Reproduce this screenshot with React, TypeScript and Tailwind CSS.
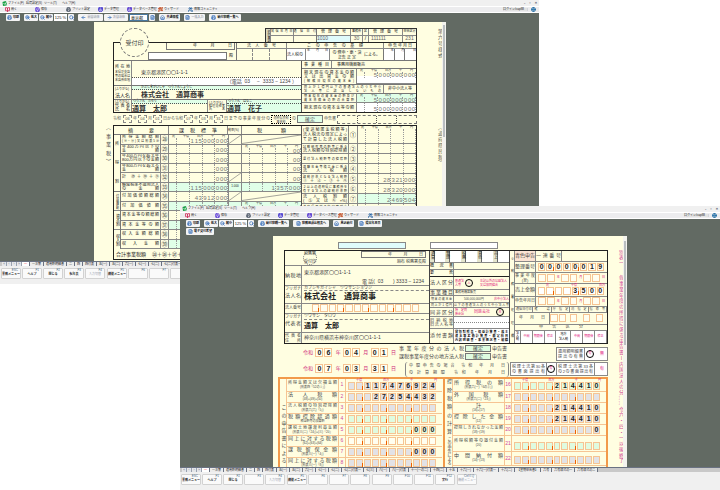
import type { ReactNode } from 'react';
import clsx from 'clsx';
import { BookOpen, Save, Printer, Database, Wand2, Users, ZoomIn, ZoomOut, Search, FileText, Home, Globe, ArrowLeft, ArrowRight } from 'lucide-react';

type BoxProps = {
    className?: string;
    children?: ReactNode;
};

const menus = ["ファイル(F)", "環境設定(S)", "ツール(T)", "ヘルプ(H)"];

const tools = [
    { label: "開く", icon: BookOpen, width: "w-[30px]", color: "text-[#d02050]" },
    { label: "保存", icon: Save, width: "w-[31px]", color: "text-[#6040d8]" },
    { label: "プリント設定", icon: Printer, width: "w-8", color: "text-gray-600" },
    { label: "データ管理", icon: Database, width: "w-[29px]", color: "text-[#4030d0]" },
    { label: "データベース管理", icon: Database, width: "w-[31px]", color: "text-[#5030d0]" },
    { label: "ウィザード", icon: Wand2, width: "w-[30px]", color: "text-[#c04010]" },
    { label: "情報コミュニティ", icon: Users, width: "w-[36px]", color: "text-[#2060a0]" },
];

const keys = [
    ["ESC", "業務メニュー"], ["F1", "ヘルプ"], ["F2", "閉じる"], ["F3", ""], ["F4", "入力切替"], ["F5", "機能メニュー"], ["F6", ""],
    ["F7", ""], ["F8", ""], ["F9", ""], ["F10", ""], ["F11", ""], ["F12", "実行"], ["CtrlとQ", "機能メニュー"],
];

const tabs = [
    "一", "一次葉", "適用額明細書", "二", "四", "四付表", "五(一)", "五(二)", "六(一)", "七(一)", "七(二)", "七(二)付表一", "七(三)", "八(一)",
    "八(一)付表", "十一(一の二)", "十四(二)", "十五", "十六(一)", "十六(一)付表一", "十六(二)", "【翌期申告書】", "六号", "六号様式の一", "六号様式の二",
];

const Chip = ({ className, children, icon: Icon }: BoxProps & { icon?: typeof Save }) => (
    <button className={clsx("flex h-[7px] shrink-0 items-center justify-center gap-px overflow-hidden whitespace-nowrap rounded-[1px] bg-[#f4f4f4] text-[3px] font-bold text-black", className)}>
        {Icon && <Icon className="size-[5px] shrink-0 text-[#2864b4]" strokeWidth={3} />}
        {children}
    </button>
);

const AppWindow = ({ className, chips, children, f3 }: BoxProps & { chips: ReactNode; f3?: string }) => (
    <section className={clsx("absolute flex h-[58%] w-3/4 flex-col overflow-hidden bg-[#626a63]", className)}>
        <header className="flex h-[6px] shrink-0 items-center bg-[#f0f0f0] pl-[2px] text-[3px]">
            <svg viewBox="0 0 10 10" className="mr-px size-[5px]" aria-hidden="true">
                <path d="M1 2l6-2 3 3-1 6-7 1z" fill="#18a045" />
                <path d="M3 4l3 3 3-5" fill="none" stroke="#fff" strokeWidth="1.5" />
            </svg>
            {menus.map((menu) => <button key={menu} className="w-[18px] whitespace-nowrap text-left">{menu}</button>)}
            <div className="ml-auto flex w-[15px] justify-between pr-[2px] text-[4px] font-bold text-gray-600">
                <button aria-label="最小化">-</button>
                <button aria-label="元に戻す">▫</button>
                <button aria-label="閉じる">×</button>
            </div>
        </header>
        <nav className="flex h-[7px] shrink-0 items-center border-y border-white bg-[#ececee] pl-[5px] text-[3px]">
            {tools.map(({ label, icon: Icon, width, color }) => (
                <button key={label} className={clsx("flex shrink-0 items-center gap-px whitespace-nowrap", width)}>
                    <Icon className={clsx("size-[5px] shrink-0", color)} strokeWidth={4} />
                    {label}
                </button>
            ))}
            <span className="ml-auto mr-[3px] w-[25px] whitespace-nowrap border-r border-gray-300 bg-[#e2e2e2]">ログイン/cap88</span>
            <Globe className="mr-[3px] size-[5px] text-[#2872a8]" strokeWidth={4} />
        </nav>
        <div className="shrink-0 pl-[6px] pt-px">{chips}</div>
        <div className="min-h-0 flex-1 overflow-hidden">{children}</div>
        <nav className="flex h-[5px] shrink-0 items-center overflow-hidden border-t border-gray-500 bg-[#c9c9c9] pl-[2px] text-[3px]">
            {["«", "‹", "›", "»"].map((a) => <button key={a} className="h-[4px] w-[5px] shrink-0 border-r border-gray-400 bg-gray-200 leading-none text-gray-500">{a}</button>)}
            {tabs.map((tab, i) => (
                <button key={tab} className={clsx("h-[4px] shrink-0 whitespace-nowrap border-r border-gray-500 px-[2px] leading-none", i === 0 ? "bg-white text-red-600" : "bg-[#ececec]")}>{tab}</button>
            ))}
        </nav>
        <footer className="flex h-[18px] shrink-0 gap-px bg-[#f0f0f0] px-px pt-[2px]">
            {keys.map(([key, label], i) => (
                <button key={key} className={clsx("flex h-[11px] w-5 shrink-0 flex-col rounded-[1px] border border-[#d2d2d2] bg-[#fafafa] text-[3px]", (i === 5 || i === 9 || i === 13) && "ml-px")}>
                    <span className="w-full pr-[2px] text-right text-[#3f6580]">{key}</span>
                    <span className={clsx("w-full whitespace-nowrap pt-px text-center", i === 4 || i === 13 ? "text-gray-400" : "font-bold")}>{key === "F3" ? f3 : label}</span>
                </button>
            ))}
        </footer>
    </section>
);

// label spread over the whole width of its cell
const Spread = ({ className, children }: BoxProps) => (
    <span className={clsx("block whitespace-nowrap [text-align-last:justify]", className)}>{children}</span>
);

const Cell = ({ className, children }: BoxProps) => (
    <div className={clsx("flex min-w-0 shrink-0 flex-col justify-center overflow-hidden border-[#888]", className)}>{children}</div>
);

const Vertical = ({ className, children }: BoxProps) => (
    <span className={clsx("whitespace-nowrap [text-align-last:justify] [writing-mode:vertical-rl]", className)}>{children}</span>
);

const Amount = ({ value = "", className, units }: { value?: string; className?: string; units?: boolean }) => (
    <div className={clsx("flex shrink-0 flex-col justify-end overflow-hidden border-b border-[#888]", className)}>
        {units && (
            <div className="flex justify-between px-[3px] text-[3px]">
                <span>兆</span><span>十億</span><span>百万</span><span>千</span><span>円</span>
            </div>
        )}
        <div className="grid min-h-0 flex-1 grid-cols-14 items-end text-center text-[6px] text-[#777]">
            {value.padStart(14, " ").split("").map((digit, i) => (
                <span key={i} className={clsx("flex h-full items-end justify-center", i % 3 === 1 && "border-r border-dotted border-[#999]")}>{digit}</span>
            ))}
        </div>
    </div>
);

const DateBlanks = ({ className }: BoxProps) => (
    <div className={clsx("flex items-center justify-between border border-[#777] pl-[26px] pr-[2px]", className)}>
        <span>年</span><span>月</span><span>日</span>
    </div>
);

const DashedDigits = ({ children }: BoxProps) => (
    <span className="flex h-[8px] w-[9px] shrink-0 items-center justify-center border border-dashed border-[#888]">{children}</span>
);

const taxRows = [
    { label: ["所得金額総額", "(⑱−⑲)又は別表5⑳"], value: "115000000" },
    { label: ["年400万円以下の", "金額"], value: "000" },
    { label: ["年400万円を超え年", "800万円以下の金額"], value: "000" },
    { label: ["年800万円を超える", "金額"], value: "000" },
    { label: ["計 ㉙＋㉚＋㉛"], value: "000" },
    { label: ["軽減税率不適用法人", "の金額"], value: "115000000", green: true },
    { label: ["付加価値額総額"], value: "43912000" },
    { label: ["付加価値額"], value: "43912000", green: true },
    { label: ["資本金等の額総額"], value: "" },
    { label: ["資本金等の額"], value: "", green: true },
    { label: ["収入金額総額"], value: "" },
    { label: ["収入金額"], value: "", green: true },
];
const taxMarks = "㉘㉙㉚㉛㉜㉝㉞㉟㊱㊲㊳㊴";

const corporateRows = [
    { label: ["試験研究費の額等に係る", "法人税額の特別控除額"], value: "" },
    { label: ["還付法人税額等の控除額"], value: "" },
    { label: ["退職年金等積立金に係る", "法人税額"], value: "" },
    { label: ["課税標準となる法人税額", "①＋②−③＋④"], value: "28321000" },
    { label: ["２以上の道府県に事務所を", "有する法人の課税標準額"], value: "28320000" },
    { label: ["法人税割額", "(⑤又は⑥×%)"], value: "2469504", green: true },
    { label: ["道府県民税の特定寄附金", "税額控除額"], value: "" },
];

const Lines = ({ lines }: { lines: string[] }) => (
    <>
        {lines.map((line) => <Spread key={line} className={clsx("leading-[4px]", line.length > 10 ? "text-[3px]" : "text-[4px]")}>{line}</Spread>)}
    </>
);

const LocalTaxForm = () => (
    <article className="ml-[94px] flex h-full w-[352px] bg-[#fffee1] text-[4px]">
        <div className="flex w-[19px] shrink-0 justify-end pr-[3px] pt-[103px]">
            <Vertical className="h-[39px] text-[5px] text-[#444]">（事業税）</Vertical>
        </div>
        <div className="w-[304px] shrink-0 pt-[6px]">
            <div className="ml-auto flex h-[14px] w-[152px] border border-b-0 border-[#333]">
                <Cell className="w-[5px] border-r bg-[#d8d8c0] text-[3px]"><Vertical>処理事項</Vertical></Cell>
                <div className="grid w-[45px] shrink-0 grid-cols-2 grid-rows-2 text-center text-[3px]">
                    <Cell className="border-b border-r"><Spread>発信年月日</Spread></Cell><Cell className="border-b"><Spread>通信日付</Spread></Cell>
                    <Cell className="border-r" /><Cell />
                </div>
                <div className="grid flex-1 grid-cols-[34px_12px_6px_1fr_13px] grid-rows-2 border-l border-[#777] text-center">
                    <Cell className="border-b border-r px-[4px]"><Spread>管理番号</Spread></Cell>
                    <Cell className="border-b border-r text-[3px]">事務所</Cell>
                    <Cell className="border-b border-r text-[3px]">区</Cell>
                    <Cell className="border-b border-r px-[4px]"><Spread>管理番号</Spread></Cell>
                    <Cell className="border-b text-[3px]">申告区分</Cell>
                    <Cell className="border-r bg-[#e0fbfb] text-left text-[5px] text-[#666]">1010</Cell>
                    <Cell className="border-r text-[5px] text-[#666]">30</Cell>
                    <Cell className="border-r text-[5px]">/</Cell>
                    <Cell className="border-r pl-[2px] text-left text-[5px] text-[#666]">111111</Cell>
                    <Cell className="text-[5px] text-[#666]">231</Cell>
                </div>
            </div>
            <div className="h-[71px] border border-[#222]">
                <div className="flex h-[18px] border-b border-[#777]">
                    <div className="relative w-[123px] shrink-0 border-r border-[#777]">
                        <div className="absolute -top-[15px] left-[6px] flex size-[29px] items-center justify-center rounded-full border border-dashed border-[#777] bg-[#fffee1] text-[6px] text-[#444]">受付印</div>
                        <DateBlanks className="ml-[52px] h-[7px] w-[69px] border-t-0 text-[4px]" />
                        <div className="flex items-center gap-[2px] pl-[34px] pt-[2px]">
                            <div className="h-[8px] w-[79px] border border-[#777] bg-white" />
                            <span>殿</span>
                        </div>
                    </div>
                    <div className="grid flex-1 grid-cols-[50px_97px_1fr] grid-rows-[6px_1fr]">
                        <Cell className="border-b border-r px-[10px]"><Spread>法人番号</Spread></Cell>
                        <Cell className="border-b border-r px-[20px]"><Spread>この申告の基礎</Spread></Cell>
                        <Cell className="border-b px-[4px]"><Spread>申告年月日</Spread></Cell>
                        <div className="grid grid-cols-3 border-r border-[#777]">
                            <span className="border-r border-dashed border-[#888]" /><span className="border-r border-dashed border-[#888]" />
                        </div>
                        <div className="flex items-center border-r border-[#777]">
                            <span className="flex h-full w-[18px] items-center bg-white">法人税の</span>
                            <div className="flex h-full w-[25px] justify-between border-x border-[#888] bg-white px-px text-[3px]"><span>年</span><span>月</span><span>日</span></div>
                            <span className="w-[34px] text-center text-[4px] leading-[5px]">の 修申・更・決<br />正告 正 定</span>
                            <span>による。</span>
                        </div>
                        <div className="grid grid-cols-3 bg-white text-right text-[3px]">
                            <span className="border-r border-[#777]">年</span><span className="border-r border-[#777]">月</span><span>日</span>
                        </div>
                    </div>
                </div>
                <div className="flex h-[51px]">
                    <div className="flex w-[188px] shrink-0 flex-col border-r border-[#555]">
                        <div className="flex h-[25px] border-b border-[#777]">
                            <Cell className="w-[18px] border-r px-px">
                                <Spread>所在地</Spread>
                                <span className="pt-px text-[3px] leading-[4px]">本県が支店等の場合は本店所在地</span>
                            </Cell>
                            <div className="flex flex-1 flex-col">
                                <p className="flex h-[17px] items-center border-b border-dotted border-[#555] pl-[9px] pt-[6px] text-[5px] text-[#444]">東京都港区〇〇1-1-1</p>
                                <p className="flex flex-1 items-center justify-end whitespace-pre bg-white pr-[4px] text-[5px] text-[#444]">{"（電話  03     −  3333 − 1234 ）"}</p>
                            </div>
                        </div>
                        <div className="flex h-[14px] border-b border-[#777]">
                            <Cell className="w-[18px] border-r px-px"><span className="h-[5px] whitespace-nowrap text-[3px]">(ふりがな)</span><Spread className="text-[5px]">法人名</Spread></Cell>
                            <div className="flex-1">
                                <p className="h-[4px] border-b border-dotted border-[#555] bg-[#e0ffe8] pl-[9px] text-[3px]">かぶしきがいしゃ　つうさんしょうじ</p>
                                <p className="flex h-[9px] items-center pl-[9px] text-[7px] font-bold text-[#333]">株式会社　通算商事</p>
                            </div>
                        </div>
                        <div className="flex flex-1">
                            <Cell className="w-[18px] border-r px-px"><span className="whitespace-nowrap text-[3px]">(ふりがな)</span><Spread>代表者</Spread><Spread>氏名</Spread></Cell>
                            <div className="w-[75px]">
                                <p className="h-[4px] border-b border-dotted border-[#555] bg-[#e0ffe8] pl-px text-[3px]">つうさん　たろう</p>
                                <p className="flex h-[8px] items-center text-[7px] font-bold text-[#333]">通算　太郎</p>
                            </div>
                            <Cell className="w-[20px] border-x px-px"><span className="whitespace-nowrap text-[3px]">(ふりがな)</span><Spread className="text-[3px]">経理責任者</Spread><Spread className="text-[3px]">氏名</Spread></Cell>
                            <div className="flex-1 bg-[#e0ffe8]">
                                <p className="h-[4px] border-b border-dotted border-[#555] pl-px text-[3px]">つうさん　はなこ</p>
                                <p className="flex h-[8px] items-center text-[7px] font-bold text-[#333]">通算　花子</p>
                            </div>
                        </div>
                    </div>
                    <div className="flex flex-1 flex-col">
                        <div className="flex h-[8px] border-b border-[#777]">
                            <Cell className="w-[30px] border-r px-[2px]"><Spread>事業種目</Spread></Cell>
                            <Cell className="flex-1 pl-[5px]">事務用機器販売</Cell>
                        </div>
                        <div className="flex h-[16px] border-b border-[#777]">
                            <Cell className="w-[55px] border-r px-[2px]"><Lines lines={["期末現在の資本金の額", "又は出資金の額", "(解散日現在の資本金)"]} /></Cell>
                            <Amount className="flex-1 bg-linear-to-b from-[#fffee1] from-50% to-white to-50% pb-[5px]" value="5000000000" units />
                        </div>
                        <div className="flex h-[9px] border-b border-[#777]">
                            <Cell className="w-[82px] border-r px-[2px]"><Lines lines={["同上が１億円以下の普通法人のうち中小", "法人等に該当しないもの"]} /></Cell>
                            <Cell className="flex-1 px-[4px]"><Spread>非中小法人等</Spread></Cell>
                        </div>
                        <div className="flex h-[9px]">
                            <Cell className="w-[55px] border-b border-r px-[2px]"><Lines lines={["期末現在の資本金の額及び", "資本準備金の額の合算額"]} /></Cell>
                            <Amount className="flex-1 bg-[#e0ffe8]" value="5000000000" units />
                        </div>
                        <div className="flex flex-1">
                            <Cell className="w-[55px] border-r px-[2px]"><Spread>期末現在の資本金等の額</Spread></Cell>
                            <Amount className="flex-1 border-b-0 bg-white" value="5000000000" />
                        </div>
                    </div>
                </div>
            </div>
            <div className="flex h-[12px] items-center gap-px whitespace-nowrap text-[#555]">
                <span className="w-[9px]">令和</span>
                <DashedDigits>06</DashedDigits>年<DashedDigits>04</DashedDigits>月<DashedDigits>01</DashedDigits>
                <span>日から令和</span>
                <DashedDigits>07</DashedDigits>年<DashedDigits>03</DashedDigits>月<DashedDigits>31</DashedDigits>
                <Spread className="w-[46px]">日までの事業年度分の</Spread>
                <span className="h-[9px] w-[20px] border border-dotted border-black text-center text-[3px] leading-[4px]">道府県民税<br />事業税</span>
                <span>の</span>
                <span className="flex h-[8px] w-[26px] items-center justify-center border border-[#777] bg-[#e0ffe8] text-[5px]">確定</span>
                <span>申告書</span>
                <span className="grid h-[9px] flex-1 grid-cols-4 border border-dashed border-[#777]"><i className="border-r border-dotted" /><i className="border-r border-dotted" /><i className="border-r border-dotted" /></span>
            </div>
            <div className="flex h-[135px] border border-[#222]">
                <div className="flex w-[188px] shrink-0 flex-col border-r border-[#555]">
                    <div className="flex h-[9px] shrink-0 border-b border-[#777] text-[5px]">
                        <Cell className="w-[55px] border-r px-[14px]"><Spread>摘要</Spread></Cell>
                        <Cell className="w-[59px] border-r px-[10px]"><Spread>課税標準</Spread></Cell>
                        <Cell className="w-[14px] border-r text-[3px]">税率(%)</Cell>
                        <Cell className="flex-1 px-[15px]"><Spread>税額</Spread></Cell>
                    </div>
                    <div className="flex min-h-0 flex-1">
                        <div className="flex w-[7px] shrink-0 flex-col border-r border-[#777] text-center">
                            <div className="flex h-[57px] shrink-0 flex-col items-center justify-between border-b border-[#777] py-[7px]"><span>所</span><span>得</span><span>割</span></div>
                            <Cell className="h-[19px] items-center border-b text-[3px]"><Vertical>付加価値割</Vertical></Cell>
                            <Cell className="h-[19px] items-center border-b"><Vertical>資本割</Vertical></Cell>
                            <Cell className="flex-1 items-center"><Vertical>収入割</Vertical></Cell>
                        </div>
                        <div className="grid flex-1 auto-rows-fr">
                            {taxRows.map((row, i) => (
                                <div key={row.label[0]} className="flex min-h-0">
                                    <Cell className="w-[40px] border-b border-r px-px"><Lines lines={row.label} /></Cell>
                                    <Cell className="w-[8px] items-center border-b border-r text-[6px] text-[#555]">{taxMarks[i]}</Cell>
                                    <Amount className={clsx("w-[59px]", row.green && "bg-[#e0ffe8]")} value={row.value} units={i === 0} />
                                    <Cell className={clsx("w-[14px] border-x border-b text-center text-[3px]", row.green && "bg-[#e0ffe8]")}>
                                        {[0, 4, 6].includes(i) ? <svg viewBox="0 0 14 9" preserveAspectRatio="none" className="h-full w-full" aria-hidden="true"><path d="M0 9L14 0" stroke="#777" strokeWidth=".7" /></svg> : i === 5 && "1.000"}
                                    </Cell>
                                    {i === 0 || i === 6
                                        ? <Cell className="flex-1 border-b"><svg viewBox="0 0 60 9" preserveAspectRatio="none" className="h-full w-full" aria-hidden="true"><path d="M0 9L60 0" stroke="#777" strokeWidth=".7" /></svg></Cell>
                                        : <Amount className={clsx("flex-1", row.green && "bg-[#e0ffe8]")} value={i === 5 ? "1357000" : i < 5 ? "00" : ""} units={i === 1 || i === 7} />}
                                </div>
                            ))}
                        </div>
                    </div>
                    <div className="flex h-[10px] shrink-0 items-center gap-[6px] pl-[2px]"><span className="text-[5px]">合計事業税額</span><span className="text-[5px]">㉝＋㉟＋㊲＋㊴</span></div>
                </div>
                <div className="flex flex-1 flex-col">
                    <div className="flex h-[18px] shrink-0">
                        <Cell className="w-[47px] border-b border-r px-px"><Spread className="leading-[5px]">(使途秘匿金税額等)</Spread><Spread className="leading-[5px]">法人税法の規定によっ</Spread><Spread className="leading-[5px]">て計算した法人税額</Spread></Cell>
                        <Cell className="w-[9px] items-center border-b border-r text-[6px]">①</Cell>
                        <Amount className="flex-1" units />
                    </div>
                    {corporateRows.map((row, i) => (
                        <div key={row.label[0]} className="flex h-[10px] shrink-0">
                            <Cell className="w-[47px] border-b border-r px-px"><Lines lines={row.label} /></Cell>
                            <Cell className="w-[9px] items-center border-b border-r text-[6px] text-[#555]">{"②③④⑤⑥⑦⑧"[i]}</Cell>
                            <Amount className={clsx("flex-1", row.green && "bg-[#e0ffe8]")} value={row.value} />
                        </div>
                    ))}
                </div>
            </div>
        </div>
        <div className="flex flex-1 flex-col gap-[67px] pl-[3px] pt-[7px] text-[5px] text-[#555]">
            <Vertical className="h-[29px]">第六号様式</Vertical>
            <Vertical className="h-[40px]">（道府県民税）</Vertical>
        </div>
        <div className="w-[4px] shrink-0 bg-[#f3f3ee] pt-[3px]"><div className="mx-px h-[112px] bg-[#b9bec0]" /></div>
    </article>
);

const boxFill = { none: "bg-[#fffef0]", green: "bg-[#dffbe0]", gray: "bg-[#e2e2e6]", white: "bg-white" };

// a short orange tick marks every third place
const DigitBoxes = ({ value = "", count, fill = "none", className }: { value?: string; count: number; fill?: keyof typeof boxFill; className?: string }) => (
    <div className={clsx("flex h-[8px] shrink-0", className)}>
        {value.padStart(count, " ").split("").map((digit, i) => (
            <span key={i} className={clsx("relative mr-px flex min-w-0 flex-1 items-center justify-center border border-[#f6c493] text-[7px] font-bold text-[#222]", boxFill[fill], count - i > 1 && (count - i) % 3 === 1 && "after:absolute after:-bottom-px after:-right-px after:h-[4px] after:w-px after:bg-[#f06000]")}>{digit}</span>
        ))}
    </div>
);

const leftRows: { label: string[]; value: string; fill: keyof typeof boxFill }[] = [
    { label: ["所得金額又は欠損金額", "(別表四「52の①」)"], value: "117476924", fill: "gray" },
    { label: ["法人税額", "(48)+(49)+(50)"], value: "27254432", fill: "gray" },
    { label: ["法人税額の特別控除額", "(別表六(六)「5」)"], value: "", fill: "gray" },
    { label: ["税額控除超過額", "相当額等の加算額"], value: "", fill: "green" },
    { label: ["課税土地譲渡利益金額", "(別表三(二)「24」)+(三)「20」"], value: "000", fill: "green" },
    { label: ["同上に対する税額", "(62)+(63)+(64)"], value: "", fill: "none" },
    { label: ["課税留保金額", "(別表三(一)「4」)"], value: "000", fill: "gray" },
    { label: ["同上に対する税額", "(別表三(一)「8」)"], value: "", fill: "gray" },
];

const rightRows: { label: string[]; value: string; fill: keyof typeof boxFill; height: string }[] = [
    { label: ["所得税の額", "(別表六(一)「6の③」)"], value: "214410", fill: "green", height: "h-[13px]" },
    { label: ["外国税額", "(別表六(二)「23」)"], value: "", fill: "gray", height: "h-[11px]" },
    { label: ["計", "(16)+(17)"], value: "214410", fill: "gray", height: "h-[11px]" },
    { label: ["控除した金額", "(12)"], value: "214410", fill: "gray", height: "h-[11px]" },
    { label: ["控除しきれなかった金額", "(18)−(19)"], value: "0", fill: "gray", height: "h-[11px]" },
    { label: ["所得税額等の還付金額", "(20)"], value: "", fill: "green", height: "h-[16px]" },
    { label: ["中間納付額", "(14)−(13)"], value: "", fill: "gray", height: "h-[14px]" },
];

const AmountRow = ({ label, value, fill, no, first, height }: { label: string[]; value: string; fill: keyof typeof boxFill; no: number; first?: boolean; height: string }) => (
    <div className={clsx("flex shrink-0 border-b border-[#f6c493]", height)}>
        <Cell className="w-[52px] border-r border-[#f6c493] px-px text-[#444]">
            {label[0].length > 1
                ? <Spread className={clsx("leading-[5px]", label[0].length > 10 ? "text-[4px]" : label[0].length > 9 ? "text-[4px]" : "text-[5px]")}>{label[0]}</Spread>
                : <span className="text-center text-[5px] leading-[5px]">{label[0]}</span>}
            <span className="whitespace-nowrap text-center text-[3px] leading-[5px]">{label[1]}</span>
        </Cell>
        <Cell className="w-[7px] border-r border-[#f6c493] text-center text-[5px] text-[#d048a0]">{no}</Cell>
        <div className="flex flex-1 flex-col justify-end pb-px pl-[2px] pr-[5px]">
            {first && <div className="flex justify-between pl-[8px] text-[3px] text-[#d02878]"><span>十億</span><span>百万</span><span>千</span><span>円</span></div>}
            <DigitBoxes count={11} value={value} fill={fill} />
        </div>
    </div>
);

const PinkDate = ({ y, m, d }: { y: string; m: string; d: string }) => (
    <div className="flex h-[11px] items-center justify-between text-[5px] text-[#d02878]">
        <span>令和</span><DigitBoxes count={2} value={y} className="h-[9px] w-[18px]" />
        <span>年</span><DigitBoxes count={2} value={m} className="h-[9px] w-[18px]" />
        <span>月</span><DigitBoxes count={2} value={d} className="h-[9px] w-[18px]" />
        <span>日</span>
    </div>
);

const Ring = ({ className, children }: BoxProps) => (
    <span className={clsx("flex size-[8px] shrink-0 items-center justify-center rounded-full border border-black text-[3px]", className)}>{children}</span>
);

const CorporateTaxForm = () => (
    <article className="ml-[93px] flex h-full w-[354px] bg-[#fffee1] text-[4px]">
        <div className="w-[335px] shrink-0 pl-[5px]">
            <div className="flex gap-[24px] pl-[60px] pt-[6px]">
                <input aria-label="提出先" className="h-[7px] w-[68px] border border-[#888] bg-[#dffcfc]" />
                <input aria-label="整理欄" className="h-[7px] w-[68px] border border-[#888] bg-white" />
            </div>
            <div className="ml-[6px] mt-px flex h-[94px] border border-[#222]">
                {/* 納税者 */}
                <div className="flex w-[145px] shrink-0 flex-col border-r border-[#444] text-[5px] text-[#444]">
                    <div className="flex h-[15px] shrink-0 items-center border-b border-[#888] pl-[18px]">
                        <div className="flex size-[14px] shrink-0 flex-col justify-between rounded-full border border-dotted border-[#777] text-center text-[4px]"><span>税務署</span><span>受付印</span></div>
                        <div className="ml-auto flex flex-col items-end gap-[2px] pr-[3px] text-[4px]">
                            <DateBlanks className="h-[7px] w-[65px]" />
                            <span>麻布 税務署長殿</span>
                        </div>
                    </div>
                    <div className="flex h-[20px] shrink-0 border-b border-[#888]">
                        <Cell className="w-[17px] border-r"><Spread>納税地</Spread></Cell>
                        <div className="flex flex-1 flex-col justify-between pb-px pl-[2px] pt-[4px]">
                            <span>東京都港区〇〇1-1-1</span>
                            <span className="whitespace-pre pr-[5px] text-right">{"電 話(  03       ) 3333 − 1234"}</span>
                        </div>
                    </div>
                    <div className="flex h-[18px] shrink-0 border-b border-[#888]">
                        <Cell className="w-[17px] border-r"><span className="h-[6px] text-[4px]">フリガナ</span><Spread className="h-[9px]">法人名</Spread></Cell>
                        <div className="flex-1 pl-[2px]">
                            <p className="flex h-[5px] items-center border-b border-dashed border-[#888] text-[4px]">カブシキガイシャ　ツウサンショウジ</p>
                            <p className="flex h-[12px] items-center text-[8px] font-bold text-[#222]">株式会社　通算商事</p>
                        </div>
                    </div>
                    <div className="flex h-[10px] shrink-0 border-b border-[#888]">
                        <Cell className="w-[17px] border-r text-[4px]">法人番号</Cell>
                        <div className="flex-1 pl-[10px] pr-[9px]"><DigitBoxes count={13} /></div>
                    </div>
                    <div className="flex h-[19px] shrink-0 border-b border-[#888]">
                        <Cell className="w-[17px] border-r"><span className="h-[6px] text-[4px]">フリガナ</span><Spread className="h-[9px]">代表者</Spread></Cell>
                        <div className="flex-1 pl-[2px]">
                            <p className="flex h-[6px] items-center border-b border-dashed border-[#888] text-[4px]">ツウサン　タロウ</p>
                            <p className="flex h-[12px] items-center text-[7px] font-bold text-[#222]">通算　太郎</p>
                        </div>
                    </div>
                    <div className="flex flex-1">
                        <Cell className="w-[17px] border-r text-[4px]"><Spread className="leading-[5px]">代表者</Spread><Spread className="leading-[5px]">住所</Spread></Cell>
                        <Cell className="flex-1 pl-[2px]">神奈川県横浜市神奈川区〇〇1-1-1</Cell>
                    </div>
                </div>
                {/* 法人区分 */}
                <div className="flex w-[80px] shrink-0 flex-col border-r border-[#444]">
                    <div className="flex h-[11px] shrink-0 bg-white">
                        {["通算", "整理", "税務", "青色", "売上"].map((text, i) => (
                            <div key={text} className={clsx("flex", i === 0 ? "w-[16px]" : "w-[17px]")}><span className="w-[5px] border-r border-[#666] bg-[#e4e4cc] text-[4px] leading-[4px] [writing-mode:vertical-rl]">{text}</span></div>
                        ))}
                    </div>
                    <div className="grid h-[15px] shrink-0 grid-cols-[24px_1fr] grid-rows-2 border-b border-[#222]">
                        <Cell className="border-r border-t"><Spread>概況書</Spread></Cell><Cell className="border-t" />
                        <Cell className="border-r border-t"><Spread>要否</Spread></Cell><Cell className="border-t" />
                    </div>
                    <div className="grid min-h-0 flex-1 grid-cols-[24px_1fr] grid-rows-[13fr_7fr_7fr_5fr_9fr_12fr_14fr] text-[#444]">
                        <Cell className="border-b border-r text-[5px]"><Spread>法人区分</Spread></Cell>
                        <div className="flex items-center gap-px border-b border-[#888] px-px text-[3px] leading-[4px] text-[#e0187c]">
                            <span className="w-[9px]">普通法人等</span><Ring>人</Ring><span className="ml-[6px] flex-1">左記以外の公益法人又は協同組合</span>
                        </div>
                        <Cell className="border-b border-r text-[5px]"><Spread>事業種目</Spread></Cell>
                        <Cell className="border-b pl-px text-[3px]">事務用機器販売</Cell>
                        <Cell className="border-b border-r px-px text-[3px]"><Spread>期末の資本金</Spread></Cell>
                        <div className="flex items-center justify-between border-b border-[#888] pl-[10px] text-[3px]"><span>500,000,000円</span><span className="text-[#e0187c]">非中小法人</span></div>
                        <Cell className="border-b border-r px-px text-[3px]"><Spread>同上が１億円</Spread></Cell>
                        <Cell className="border-b text-[3px]"><Spread>以下の普通法人のうち中小法人等</Spread></Cell>
                        <Cell className="border-b border-r text-[5px]"><Spread>同非区分</Spread></Cell>
                        <div className="flex items-center justify-between border-b border-[#888] pr-[5px] text-[3px] leading-[4px] text-[#e0187c]"><span className="w-[14px] pl-px">特　定同族会社</span><span className="text-[4px]">同族会社</span><Ring>非</Ring></div>
                        <Cell className="border-b border-r"><Lines lines={["旧納税地", "旧法人名等"]} /></Cell>
                        <Cell className="border-b bg-white"><div className="border-t border-dotted border-[#888]" /></Cell>
                        <Cell className="border-r text-[5px]"><Spread>添付書類</Spread></Cell>
                        <Cell className="bg-white px-px text-[3px] font-bold leading-[4px] text-black"><Spread>貸借対照表・損益計算書・株主</Spread><Spread>資本等変動計算書・勘定科目</Spread><Spread>内訳明細書・事業概況書・組織</Spread></Cell>
                    </div>
                </div>
                {/* 税務署処理欄 */}
                <div className="flex min-w-0 flex-1">
                    <Cell className="w-[5px] items-center border-r text-[3px]"><Vertical className="h-[80px]">※税務署処理欄</Vertical></Cell>
                    <div className="flex min-w-0 flex-1 flex-col text-[#444]">
                        <div className="flex h-[11px] shrink-0 border-b border-[#888] text-[5px]">
                            <Cell className="w-[21px] border-r bg-[#fbe3d3]">青色申告</Cell>
                            <Cell className="w-[26px] border-r"><Spread>一連番号</Spread></Cell>
                        </div>
                        <div className="flex h-[11px] shrink-0 border-b border-[#888]">
                            <Cell className="w-[21px] border-r text-[5px]">整理番号</Cell>
                            <DigitBoxes count={8} value="00000019" className="mt-px flex-1 px-[2px]" />
                        </div>
                        <div className="flex h-[11px] shrink-0 border-b border-[#888]">
                            <Cell className="w-[21px] border-r text-center"><Spread className="leading-[5px]">事業年度</Spread><span className="leading-[5px]">(至)</span></Cell>
                            <div className="flex flex-1 items-center gap-px px-[2px] text-[3px] text-[#e0187c]"><DigitBoxes count={2} className="flex-1" />年<DigitBoxes count={2} className="flex-1" />月<DigitBoxes count={2} className="flex-1" />日</div>
                        </div>
                        <div className="flex h-[13px] shrink-0 border-b border-[#888]">
                            <Cell className="w-[21px] border-r text-[5px]">売上金額</Cell>
                            <div className="flex flex-1 flex-col px-[2px]">
                                <div className="flex justify-between pl-[8px] text-[3px] text-[#e0187c]"><span>兆</span><span>十億</span><span>百万</span></div>
                                <DigitBoxes count={8} value="3500" fill="white" />
                            </div>
                        </div>
                        <div className="flex h-[10px] shrink-0 border-b border-[#888]">
                            <Cell className="w-[21px] border-r"><Spread>申告年月日</Spread></Cell>
                            <div className="flex flex-1 items-center gap-px px-[2px] text-[3px] text-[#e0187c]"><DigitBoxes count={2} className="flex-1" />年<DigitBoxes count={2} className="flex-1" />月<DigitBoxes count={2} className="flex-1" />日</div>
                        </div>
                        <div className="grid h-[6px] shrink-0 grid-cols-5 border-b border-[#888] text-[3px]">
                            {["通信日付印", "確認", "庁指定", "局指定", "指導等"].map((text) => <Cell key={text} className="border-r px-px"><Spread>{text}</Spread></Cell>)}
                        </div>
                        <div className="flex h-[12px] shrink-0 items-center border-b border-[#888]">
                            <Cell className="h-full w-[35px] border-r px-[4px]"><Spread>年月日</Spread></Cell>
                            <DigitBoxes count={2} className="w-[17px]" />
                            <div className="flex flex-1 justify-around"><DigitBoxes count={1} className="w-[8px]" /><DigitBoxes count={1} className="w-[8px]" /><DigitBoxes count={1} className="w-[8px]" /></div>
                        </div>
                        <Cell className="h-[6px] border-b px-[24px]"><Spread>申告区分</Spread></Cell>
                        <div className="grid min-h-0 flex-1 grid-cols-[6px_1fr_1fr_1fr_15px_1fr_1fr_1fr] bg-white text-center text-[3px] text-[#e0187c]">
                            <Cell className="border-r text-black">法人税</Cell>
                            {["中間", "期限後", "修正"].map((text) => <Cell key={text} className="border-r"><span className="whitespace-nowrap">{text}</span></Cell>)}
                            <Cell className="border-r text-black leading-[5px]"><span>地方</span><span>法人税</span></Cell>
                            {["中間", "期限後", "修正"].map((text) => <Cell key={text} className="border-r"><span className="whitespace-nowrap">{text}</span></Cell>)}
                        </div>
                    </div>
                </div>
            </div>
            <div className="flex h-[33px] pl-[25px] text-[5px] text-[#444]">
                <div className="flex w-[93px] shrink-0 flex-col justify-between py-[3px]">
                    <PinkDate y="06" m="04" d="01" />
                    <PinkDate y="07" m="03" d="31" />
                </div>
                <div className="ml-[3px] w-[110px] shrink-0 pt-px">
                    {["事業年度分の法人税", "課税事業年度分の地方法人税"].map((text) => (
                        <div key={text} className="flex h-[8px] items-center gap-px">
                            <Spread className="w-[65px]">{text}</Spread>
                            <span className="flex h-[7px] w-[26px] items-center justify-center border border-[#777] bg-[#dffbe0]">確定</span>
                            <span>申告書</span>
                        </div>
                    ))}
                    <div className="ml-[6px] mt-px flex h-[15px] flex-col justify-around rounded-[3px] border-x border-[#888] px-[3px] text-[4px]">
                        <Spread>中間申告の場合 令和 年 月 日</Spread>
                        <Spread>の計算期間 令和 年 月 日</Spread>
                    </div>
                </div>
                <div className="flex flex-1 flex-col gap-px pt-[3px]">
                    <div className="ml-auto flex h-[14px] w-[52px] items-center border border-[#888] bg-white text-[4px]">
                        <Cell className="h-full w-[28px] border-r px-px"><Spread className="leading-[5px]">適用額明細書</Spread><Spread className="leading-[5px]">提出の有無</Spread></Cell><Ring className="ml-px text-[#e0187c]">有</Ring><span className="ml-auto pr-[3px] text-[#e0187c]">無</span>
                    </div>
                    <div className="ml-auto flex h-[14px] w-[98px] items-center border border-[#888] bg-white text-[4px]">
                        <Cell className="h-full w-[36px] border-r px-px"><Spread className="leading-[5px]">税理士法第30条</Spread><Spread className="leading-[5px]">の書面提出有</Spread></Cell><Ring className="text-[#e0187c]">有</Ring>
                        <Cell className="ml-px h-full w-[39px] border-x px-px"><Spread className="leading-[5px]">税理士法第33条</Spread><Spread className="leading-[5px]">の2の書面提出有</Spread></Cell><span className="ml-auto pr-[3px] text-[#e0187c]">有</span>
                    </div>
                </div>
            </div>
            <div className="flex h-[100px] border-2 border-[#f29a4a]">
                <div className="flex w-[165px] shrink-0 border-r-2 border-[#f29a4a]">
                    <div className="flex w-[7px] shrink-0 flex-col items-center border-r border-[#f6c493] pt-[26px] text-[5px] text-[#444]"><Vertical className="h-[58px]">この申告書による</Vertical></div>
                    <div className="flex min-w-0 flex-1 flex-col pr-px">
                        {leftRows.map((row, i) => <AmountRow key={i} {...row} no={i + 1} first={i === 0} height={i === 0 ? "h-[13px]" : "h-[11px]"} />)}
                    </div>
                </div>
                <div className="flex min-w-0 flex-1">
                    <div className="flex w-[8px] shrink-0 flex-col items-center border-r border-[#f6c493] text-[5px] text-[#444]">
                        <Vertical className="h-[55px]">控除税額の計算</Vertical>
                        <Vertical className="mt-[3px] h-[28px] text-[4px]">この申告による</Vertical>
                    </div>
                    <div className="flex min-w-0 flex-1 flex-col">
                        {rightRows.map((row, i) => <AmountRow key={i} {...row} no={i + 16} first={i === 0} />)}
                    </div>
                </div>
            </div>
        </div>
        <div className="flex flex-1 flex-col gap-[10px] pl-[3px] pt-[14px] text-[5px] text-[#d0489c]">
            <Vertical className="h-[15px]">別表一</Vertical>
            <Vertical className="h-[188px]">各事業年度の所得に係る申告書ー内国法人の分……令六・四・一以後終了</Vertical>
        </div>
        <div className="w-[4px] shrink-0 bg-[#f3f3ee] pt-[5px]"><div className="mx-px h-[104px] bg-[#b9bec0]" /></div>
    </article>
);

const ZoomTools = () => (
    <>
        <Chip className="w-[14px]" icon={Printer}>印刷</Chip>
        <Chip className="ml-[3px] w-[14px]" icon={ZoomIn}>拡大</Chip>
        <Chip className="w-[14px]" icon={ZoomOut}>縮小</Chip>
        <input aria-label="倍率" defaultValue="125 %" className="h-[7px] w-[13px] bg-white text-center text-[4px]" />
        <Chip className="w-[6px]" icon={Search} />
    </>
);

const App = () => {
    return (
        <main className="relative h-screen overflow-hidden bg-white font-['Liberation_Sans','Noto_Sans_CJK_JP',sans-serif] leading-none text-[#222]">
            <AppWindow
                className="left-0 top-0 border-r border-white"
                f3="転年表"
                chips={
                    <div className="flex h-[8px] gap-px">
                        <ZoomTools />
                        <Chip className="ml-[3px] w-[25px] text-gray-400" icon={ArrowLeft}>前自治体</Chip>
                        <Chip className="w-[24px] text-gray-400" icon={ArrowRight}>次自治体</Chip>
                        <input aria-label="自治体" defaultValue="東京都" className="h-[7px] w-[19px] border border-[#4878a0] bg-white px-px text-[4px]" />
                        <Chip className="w-[6px]" icon={FileText} />
                        <Chip className="ml-[3px] w-[21px]" icon={Home}>共通情報</Chip>
                        <Chip className="ml-[3px] w-[21px] text-gray-400" icon={FileText}>一括入力</Chip>
                        <Chip className="ml-[3px] w-[32px]" icon={Printer}>納付税額一覧へ</Chip>
                    </div>
                }
            >
                <LocalTaxForm />
            </AppWindow>
            <AppWindow
                className="bottom-0 right-0"
                chips={
                    <>
                        <div className="flex h-[8px] gap-px">
                            <ZoomTools />
                            <Chip className="ml-[3px] w-[31px]" icon={Printer}>納付税額一覧へ</Chip>
                            <Chip className="ml-[3px] w-[36px]" icon={FileText}>税務用語比較表へ</Chip>
                            <Chip className="ml-[3px] w-[21px]" icon={Home}>見込納付</Chip>
                            <Chip className="ml-[3px] w-[24px]" icon={FileText}>提出年月日</Chip>
                        </div>
                        <div className="flex h-[8px]"><Chip className="w-[28px]" icon={FileText}>電子交付希望</Chip></div>
                    </>
                }
            >
                <CorporateTaxForm />
            </AppWindow>
        </main>
    );
}

export default App;
